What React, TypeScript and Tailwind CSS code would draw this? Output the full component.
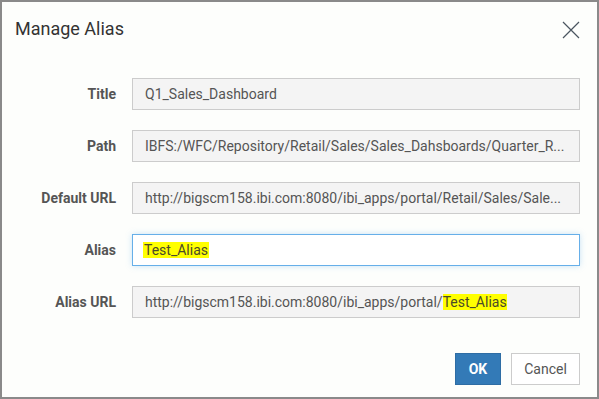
import React from "react";

const font = { fontFamily: "Roboto, 'Noto Sans', sans-serif" };

function Row({ label, children }: { label: string; children: React.ReactNode }) {
  return (
    <div className="flex items-center h-[32px]">
      <div className="w-[114px] text-right text-[14px] font-bold text-[#555555]">{label}</div>
      <div className="ml-[16px] w-[448px] h-[32px]">{children}</div>
    </div>
  );
}

function ReadOnly({ children }: { children: React.ReactNode }) {
  return (
    <div className="h-full w-full border border-[#cccccc] bg-[#f4f4f4] pl-[12px] flex items-center text-[14px] text-[#555555] whitespace-nowrap overflow-hidden">
      {children}
    </div>
  );
}

export default function App() {
  return (
    <div style={font} className="w-[599px] h-[399px] bg-white">
      <div className="w-[599px] h-[399px] border-2 border-[#8a8a8a] bg-[#fdfefc] flex flex-col">
        <div className="flex items-start justify-between pt-[15px] pl-[13px] pr-[17px]">
          <div className="text-[18px] leading-[24px] text-[#333333]">Manage Alias</div>
          <svg width="18" height="18" viewBox="0 0 18 18" className="mt-[4px]">
            <path d="M1 1 L17 17 M17 1 L1 17" stroke="#4a5560" strokeWidth="1.2" fill="none" />
          </svg>
        </div>
        <div className="flex flex-col gap-[20px] mt-[37px]">
          <Row label="Title">
            <ReadOnly>Q1_Sales_Dashboard</ReadOnly>
          </Row>
          <Row label="Path">
            <ReadOnly>IBFS:/WFC/Repository/Retail/Sales/Sales_Dahsboards/Quarter_R...</ReadOnly>
          </Row>
          <Row label="Default URL">
            <ReadOnly>http://bigscm158.ibi.com:8080/ibi_apps/portal/Retail/Sales/Sale...</ReadOnly>
          </Row>
          <Row label="Alias">
            <div className="h-full w-full border border-[#66afe9] bg-white pl-[10px] flex items-center text-[14px] text-[#555555] shadow-[0_0_6px_rgba(102,175,233,0.35)]">
              <span className="bg-[#ffff00] leading-[16px] px-[1px] text-[#4a4a2a]">Test_Alias</span>
            </div>
          </Row>
          <Row label="Alias URL">
            <ReadOnly>
              http://bigscm158.ibi.com:8080/ibi_apps/portal/
              <span className="bg-[#ffff00] leading-[16px] text-[#4a4a2a]">Test_Alias</span>
            </ReadOnly>
          </Row>
        </div>
        <div className="flex justify-end gap-[10px] mt-[35px] pr-[17px]">
          <button className="h-[32px] w-[46px] bg-[#337ab7] border border-[#2e6da4] text-white font-bold text-[14px]">OK</button>
          <button className="h-[32px] w-[69px] bg-white border border-[#cccccc] text-[#555555] text-[14px]">Cancel</button>
        </div>
      </div>
    </div>
  );
}
